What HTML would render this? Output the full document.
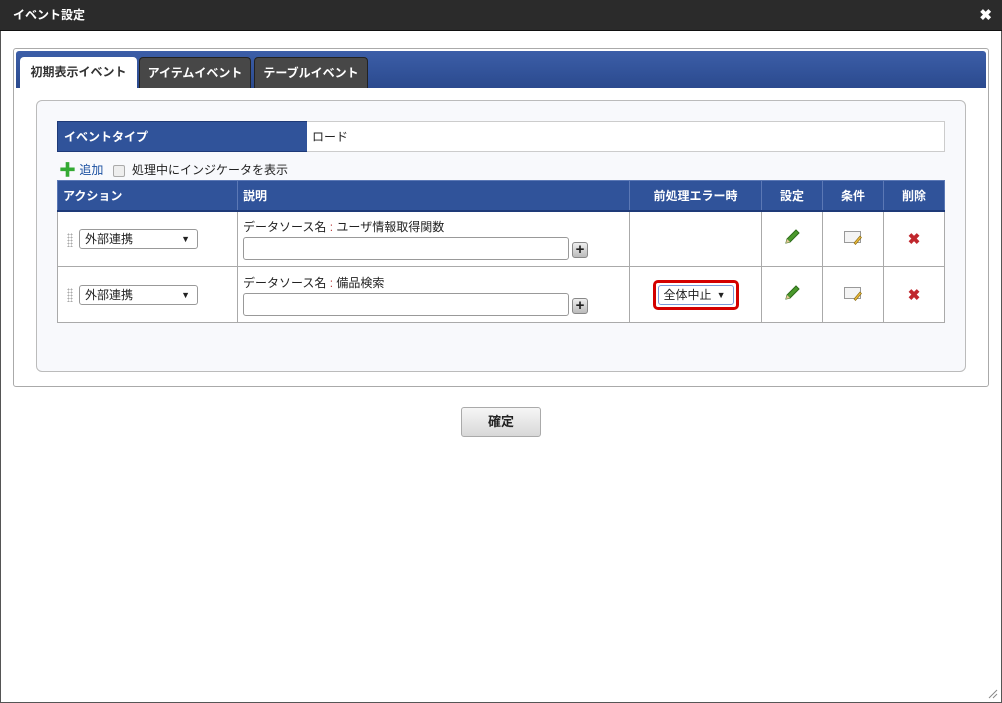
<!DOCTYPE html>
<html><head><meta charset="utf-8"><style>
*{box-sizing:border-box;margin:0;padding:0}
body{width:1002px;height:703px;background:#fff;font-family:"Liberation Sans","Noto Sans CJK JP",sans-serif;font-size:12px;color:#222;position:relative;overflow:hidden;box-shadow:inset 0 0 0 1px #555}
.abs{position:absolute}
.title{left:0;top:0;width:1002px;height:31px;background:#2b2b2b;border-bottom:1px solid #111;color:#fff;font-weight:bold;font-size:12px;line-height:31px;padding-left:13px}
.close{right:10px;top:0;color:#fff;font-size:15px;font-weight:bold;line-height:31px}
.outer{left:13px;top:48px;width:976px;height:339px;border:1px solid #aaa;border-radius:3px}
.tabbar{left:16px;top:51px;width:970px;height:37px;background:linear-gradient(#3c5ea8,#2b4a8e);border-radius:3px 3px 0 0}
.tab{top:57px;height:31px;line-height:30px;text-align:center;font-weight:bold;font-size:12px;border-radius:4px 4px 0 0}
.t1{left:20px;width:117px;background:#fff;color:#333}
.t2{left:139px;width:112px;background:#474747;color:#fff;border:1px solid #222;border-bottom:0}
.t3{left:254px;width:114px;background:#474747;color:#fff;border:1px solid #222;border-bottom:0}
.inner{left:36px;top:100px;width:930px;height:272px;background:#f8f9fc;border:1px solid #bbb;border-radius:6px}
.hd{background:#30539a;color:#fff;font-weight:bold}
table{border-collapse:collapse;position:absolute;left:57px;top:180px;width:888px}
td,th{border:1px solid #aaa;font-size:12px}
th{background:#30539a;color:#fff;height:30px;border-color:#5b78b5;border-bottom:2px solid #1e3a78}
td{background:#fff;height:56px;vertical-align:middle}
.sel{display:inline-block;width:119px;height:20px;border:1px solid #999;border-radius:3px;background:#fff;line-height:18px;padding-left:5px;position:relative;font-size:12px}
.sel:after{content:"▼";position:absolute;right:7px;top:0;font-size:9px}
.ta{width:326px;height:23px;border:1px solid #999;border-radius:3px;background:#fff;display:inline-block;vertical-align:bottom}
.plus{display:inline-block;width:16px;height:16px;background:linear-gradient(#eee,#bbb);border:1px solid #888;border-radius:3px;text-align:center;line-height:13px;font-weight:bold;font-size:15px;vertical-align:bottom;margin-left:3px;margin-bottom:2px}
.grip{display:inline-block;width:6px;height:14px;background:radial-gradient(circle,#aaa 0.8px,transparent 1px) 0 0/3px 3px;vertical-align:middle;margin:0 6px 0 9px}
.btn{left:461px;top:407px;width:80px;height:30px;border:1px solid #aaa;border-radius:3px;background:linear-gradient(#f6f6f6,#d8d8d8);text-align:center;line-height:28px;font-weight:bold;font-size:13px}
</style></head><body>
<div class="abs title">イベント設定</div>
<div class="abs close">✖</div>
<div class="abs outer"></div>
<div class="abs tabbar"></div>
<div class="abs tab t1">初期表示イベント</div>
<div class="abs tab t2">アイテムイベント</div>
<div class="abs tab t3">テーブルイベント</div>
<div class="abs inner"></div>
<div class="abs hd" style="left:57px;top:121px;width:251px;height:31px;line-height:30px;padding-left:6px;border:1px solid #1e3a78">イベントタイプ</div>
<div class="abs" style="left:307px;top:121px;width:638px;height:31px;line-height:30px;padding-left:5px;background:#fff;border:1px solid #ccc;border-left:0">ロード</div>
<div class="abs" style="left:59px;top:163px;line-height:14px"><span style="color:#3a3;font-weight:bold;font-size:17px;vertical-align:middle">✚</span><span style="color:#1a4fa0"> 追加</span>&nbsp;&nbsp;&nbsp;<span style="display:inline-block;width:12px;height:12px;border:1px solid #aaa;border-radius:2px;background:#eee;vertical-align:middle"></span>&nbsp;&nbsp;処理中にインジケータを表示</div>
<table>
<tr><th style="width:180px;text-align:left;padding-left:5px">アクション</th><th style="width:392px;text-align:left;padding-left:5px">説明</th><th style="width:132px">前処理エラー時</th><th style="width:61px">設定</th><th style="width:61px">条件</th><th>削除</th></tr>
<tr><td style="height:55px"><span class="grip"></span><span class="sel">外部連携</span></td>
<td style="padding-left:5px"><div style="margin-bottom:2px">データソース名 <span style="color:#b44">:</span> ユーザ情報取得関数</div><span class="ta"></span><span class="plus">+</span></td>
<td></td>
<td style="text-align:center"><svg width="18" height="18" viewBox="0 0 18 18"><path d="M3 15l1-4 9-9 3 3-9 9z" fill="#4a9a2c" stroke="#2d6b1a"/><path d="M3 15l1-4 3 3z" fill="#e8c89a"/></svg></td>
<td style="text-align:center"><svg width="18" height="16" viewBox="0 0 18 16"><rect x="0.5" y="2.5" width="16" height="11" fill="#f4f4f4" stroke="#999"/><path d="M10 14l6-7 1.5 1.5-6 7z" fill="#e9b93a" stroke="#8a6a10" stroke-width=".6"/></svg></td>
<td style="text-align:center;color:#c0272d;font-size:15px;font-weight:bold">✖</td></tr>
<tr><td style="height:55px"><span class="grip"></span><span class="sel">外部連携</span></td>
<td style="padding-left:5px"><div style="margin-bottom:2px">データソース名 <span style="color:#b44">:</span> 備品検索</div><span class="ta"></span><span class="plus">+</span></td>
<td style="text-align:center"><span style="display:inline-block;border:3px solid #d40000;border-radius:5px;padding:2px"><span class="sel" style="width:76px;border-color:#7a9ad8;text-align:left">全体中止</span></span></td>
<td style="text-align:center"><svg width="18" height="18" viewBox="0 0 18 18"><path d="M3 15l1-4 9-9 3 3-9 9z" fill="#4a9a2c" stroke="#2d6b1a"/><path d="M3 15l1-4 3 3z" fill="#e8c89a"/></svg></td>
<td style="text-align:center"><svg width="18" height="16" viewBox="0 0 18 16"><rect x="0.5" y="2.5" width="16" height="11" fill="#f4f4f4" stroke="#999"/><path d="M10 14l6-7 1.5 1.5-6 7z" fill="#e9b93a" stroke="#8a6a10" stroke-width=".6"/></svg></td>
<td style="text-align:center;color:#c0272d;font-size:15px;font-weight:bold">✖</td></tr>
</table>
<div class="abs btn">確定</div>
<svg class="abs" style="right:4px;bottom:4px" width="10" height="10"><path d="M9 1L1 9M9 5L5 9" stroke="#888"/></svg>
</body></html>
